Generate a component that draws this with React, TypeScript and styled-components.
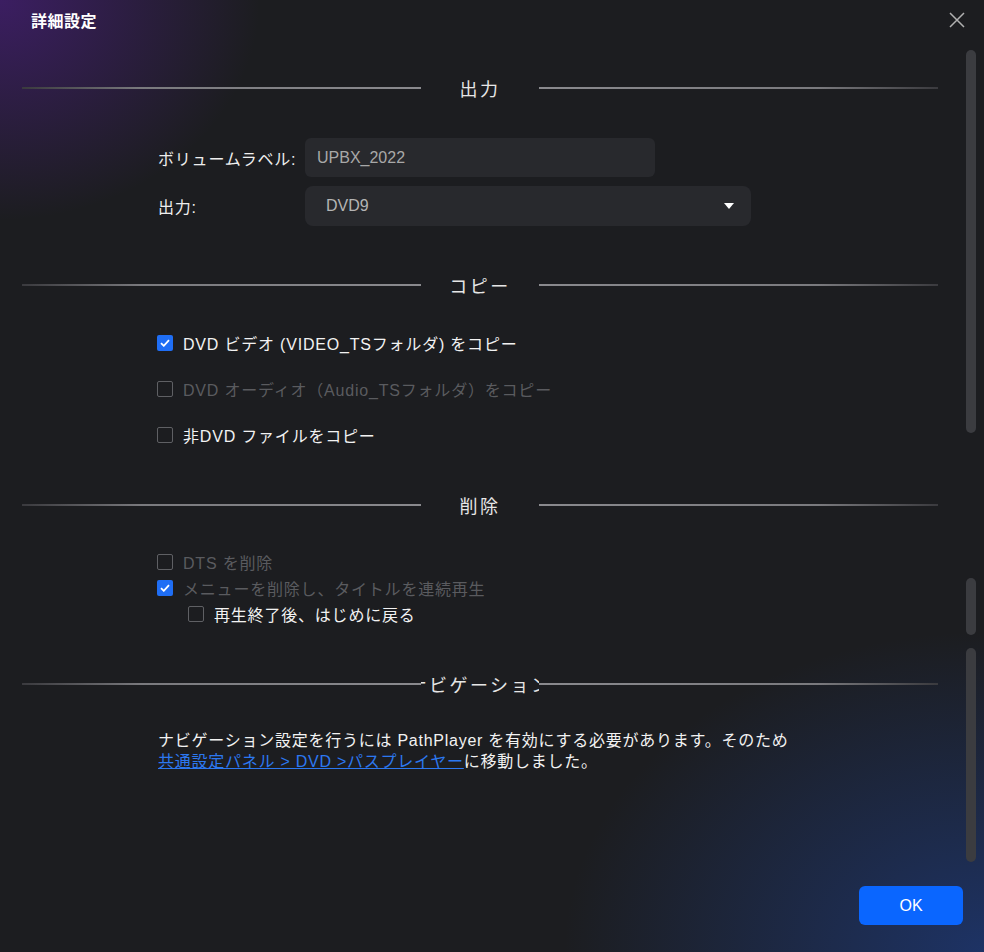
import React from 'react'
import styled, { createGlobalStyle } from 'styled-components'

const GlobalStyle = createGlobalStyle`
  html, body {
    margin: 0;
    padding: 0;
    background: #1c1d20;
  }
  body {
    font-family: "Liberation Sans", "Noto Sans CJK JP", sans-serif;
    color: #ececec;
  }
`

const Page = styled.div`
  width: 984px;
  height: 952px;
  display: flex;
  flex-direction: column;
  overflow: hidden;
  background:
    radial-gradient(ellipse 260px 220px at 0 0, rgba(70, 30, 120, 0.75), rgba(70, 30, 120, 0) 100%),
    radial-gradient(ellipse 420px 320px at 100% 100%, rgba(30, 60, 130, 0.7), rgba(30, 60, 130, 0) 100%),
    #1c1d20;
`

const TitleBar = styled.div`
  height: 40px;
  display: flex;
  align-items: center;
  justify-content: space-between;
  padding: 0 17px 0 31px;
`

const Title = styled.h1`
  margin: 0;
  font-size: 16px;
  font-weight: bold;
  letter-spacing: 0.5px;
  color: #ffffff;
`

const CloseButton = styled.button`
  width: 20px;
  height: 20px;
  padding: 0;
  border: 0;
  background: transparent;
  display: flex;
  align-items: center;
  justify-content: center;
`

const Body = styled.div`
  flex: 1;
  display: flex;
  min-height: 0;
`

const Content = styled.div`
  width: 916px;
  margin-left: 22px;
  padding-top: 36px;
`

const ScrollRail = styled.div`
  width: 10px;
  margin-left: 28px;
  padding-top: 10px;
  display: flex;
  flex-direction: column;
`

const Thumb = styled.div<{ $h: number; $gap: number }>`
  height: ${(p) => p.$h}px;
  margin-bottom: ${(p) => p.$gap}px;
  border-radius: 5px;
  background: #3b3c40;
`

const Section = styled.section<{ $gap: number }>`
  margin-bottom: ${(p) => p.$gap}px;
`

const Header = styled.div`
  display: flex;
  align-items: center;
  height: 24px;
`

const Line = styled.div<{ $left?: boolean }>`
  flex: 1;
  height: 2px;
  background: ${(p) =>
    p.$left
      ? 'linear-gradient(to right, #3a3a3e, #7a7a7e 30%, #8a8a8e)'
      : 'linear-gradient(to right, #8a8a8e, #7a7a7e 70%, #3a3a3e)'};
`

const HeaderLabel = styled.div`
  width: 118px;
  flex: none;
  display: flex;
  justify-content: center;
  overflow: hidden;
  white-space: nowrap;
  font-size: 18px;
  letter-spacing: 2.5px;
  color: #e6e6e6;
`

const SectionBody = styled.div<{ $top: number; $gap: number; $left?: number }>`
  margin-top: ${(p) => p.$top}px;
  padding-left: ${(p) => p.$left ?? 136}px;
  display: flex;
  flex-direction: column;
  gap: ${(p) => p.$gap}px;
`

const FormRow = styled.div`
  display: flex;
  align-items: center;
`

const FieldLabel = styled.label`
  width: 147px;
  font-size: 16px;
  letter-spacing: 0.8px;
  color: #eeeeee;
`

const TextInput = styled.div`
  width: 350px;
  height: 39px;
  box-sizing: border-box;
  padding-left: 12px;
  display: flex;
  align-items: center;
  border-radius: 6px;
  background: #28292d;
  font-size: 16px;
  color: #a8a8a8;
`

const Select = styled.div`
  width: 446px;
  height: 40px;
  box-sizing: border-box;
  padding: 0 16px 0 21px;
  display: flex;
  align-items: center;
  justify-content: space-between;
  border-radius: 8px;
  background: #28292d;
  font-size: 16px;
  color: #b4b4b4;
`

const CheckRow = styled.div<{ $indent?: number }>`
  height: 24px;
  display: flex;
  align-items: center;
  gap: 10px;
  padding-left: ${(p) => p.$indent ?? 0}px;
`

const Box = styled.span<{ $checked?: boolean }>`
  width: 16px;
  height: 16px;
  box-sizing: border-box;
  border-radius: 2px;
  display: flex;
  align-items: center;
  justify-content: center;
  background: ${(p) => (p.$checked ? '#1f6ef5' : 'transparent')};
  border: ${(p) => (p.$checked ? '0' : '1.5px solid #5f6064')};
`

const CheckText = styled.span<{ $disabled?: boolean }>`
  font-size: 16px;
  letter-spacing: 0.8px;
  color: ${(p) => (p.$disabled ? '#5a5b5f' : '#f2f2f2')};
`

const Note = styled.p`
  margin: 0;
  font-size: 16px;
  line-height: 21px;
  letter-spacing: 0.75px;
  color: #f2f2f2;
`

const NoteLink = styled.a`
  color: #2c78f0;
  text-decoration: underline;
`

const Footer = styled.div`
  display: flex;
  justify-content: flex-end;
  padding: 0 21px 27px 0;
`

const OkButton = styled.button`
  width: 104px;
  height: 39px;
  border: 0;
  border-radius: 6px;
  background: #0a66ff;
  color: #ffffff;
  font-family: inherit;
  font-size: 16px;
`

const SectionHeader = ({ label }: { label: string }) => (
  <Header>
    <Line $left />
    <HeaderLabel>{label}</HeaderLabel>
    <Line />
  </Header>
)

const Check = ({
  checked,
  disabled,
  indent,
  children,
}: {
  checked?: boolean
  disabled?: boolean
  indent?: number
  children: React.ReactNode
}) => (
  <CheckRow $indent={indent}>
    <Box $checked={checked}>
      {checked && (
        <svg width="10" height="8" viewBox="0 0 10 8">
          <path d="M1 4.2 L3.8 6.8 L9 1.2" fill="none" stroke="#fff" strokeWidth="1.8" />
        </svg>
      )}
    </Box>
    <CheckText $disabled={disabled}>{children}</CheckText>
  </CheckRow>
)

export default function App() {
  return (
    <Page>
      <GlobalStyle />
      <TitleBar>
        <Title>詳細設定</Title>
        <CloseButton aria-label="閉じる">
          <svg width="16" height="16" viewBox="0 0 16 16">
            <path d="M1 1 L15 15 M15 1 L1 15" stroke="#b0b0b0" strokeWidth="1.5" />
          </svg>
        </CloseButton>
      </TitleBar>

      <Body>
        <Content>
          <Section $gap={47}>
            <SectionHeader label="出力" />
            <SectionBody $top={38} $gap={9}>
              <FormRow>
                <FieldLabel>ボリュームラベル:</FieldLabel>
                <TextInput>UPBX_2022</TextInput>
              </FormRow>
              <FormRow>
                <FieldLabel>出力:</FieldLabel>
                <Select>
                  DVD9
                  <svg width="12" height="8" viewBox="0 0 12 8">
                    <path d="M1 1 L11 1 L6 7 Z" fill="#ffffff" />
                  </svg>
                </Select>
              </FormRow>
            </SectionBody>
          </Section>

          <Section $gap={46}>
            <SectionHeader label="コピー" />
            <SectionBody $top={34} $gap={22} $left={135}>
              <Check checked>DVD ビデオ (VIDEO_TSフォルダ) をコピー</Check>
              <Check disabled>DVD オーディオ（Audio_TSフォルダ）をコピー</Check>
              <Check>非DVD ファイルをコピー</Check>
            </SectionBody>
          </Section>

          <Section $gap={46}>
            <SectionHeader label="削除" />
            <SectionBody $top={33} $gap={2} $left={135}>
              <Check disabled>DTS を削除</Check>
              <Check checked disabled>
                メニューを削除し、タイトルを連続再生
              </Check>
              <Check indent={31}>再生終了後、はじめに戻る</Check>
            </SectionBody>
          </Section>

          <Section $gap={0}>
            <SectionHeader label="ナビゲーション" />
            <SectionBody $top={34} $gap={0}>
              <Note>
                ナビゲーション設定を行うには PathPlayer を有効にする必要があります。そのため
                <br />
                <NoteLink href="#">共通設定パネル &gt; DVD &gt;パスプレイヤー</NoteLink>
                に移動しました。
              </Note>
            </SectionBody>
          </Section>
        </Content>

        <ScrollRail>
          <Thumb $h={383} $gap={145} />
          <Thumb $h={57} $gap={13} />
          <Thumb $h={214} $gap={0} />
        </ScrollRail>
      </Body>

      <Footer>
        <OkButton>OK</OkButton>
      </Footer>
    </Page>
  )
}
